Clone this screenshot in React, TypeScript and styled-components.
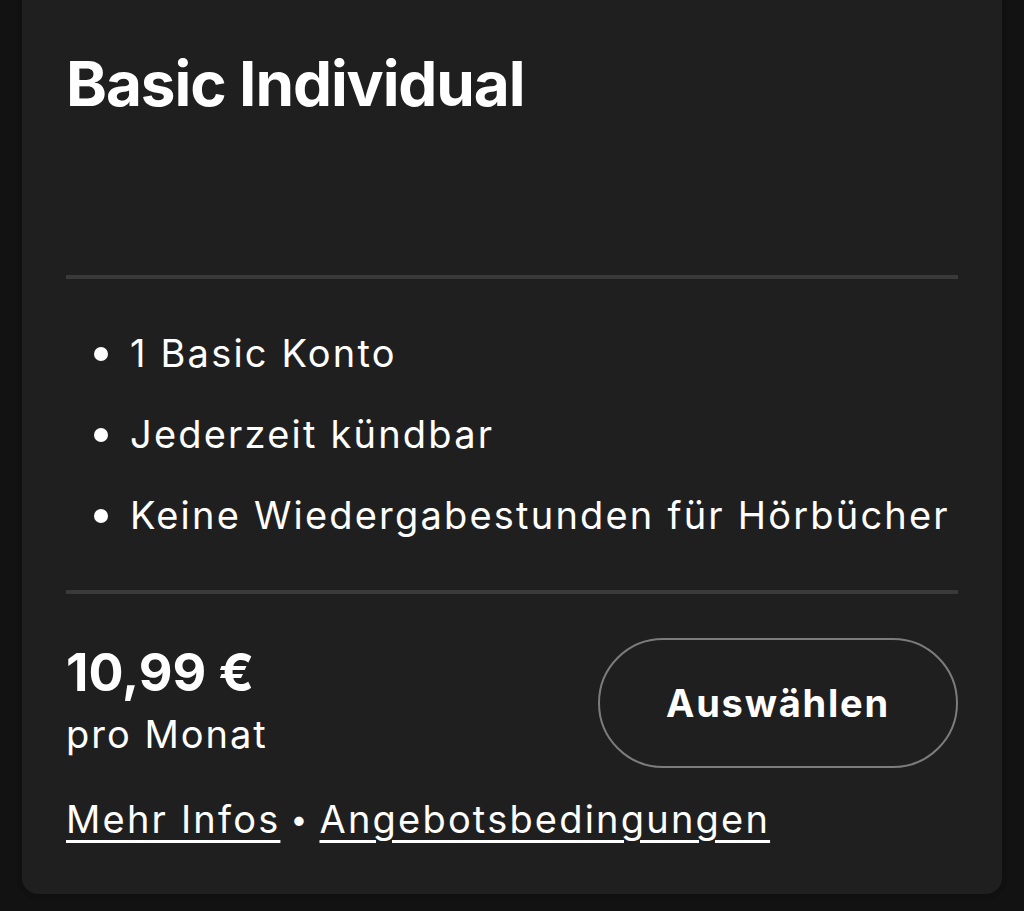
import React from "react";
import styled, { createGlobalStyle } from "styled-components";

const Global = createGlobalStyle`
  html, body { margin: 0; padding: 0; background: #121212; }
  body { font-family: Inter, "Noto Sans", sans-serif; color: #fff; -webkit-font-smoothing: antialiased; }
`;

const Page = styled.div`
  width: 1024px;
  height: 911px;
  background: #121212;
  padding: 0 22px;
  box-sizing: border-box;
`;

const Card = styled.div`
  background: #1f1f1f;
  border-radius: 0 0 16px 16px;
  padding: 44px 44px 50px;
  box-sizing: border-box;
  display: flex;
  flex-direction: column;
  box-shadow: 0 0 0 5px #101010;
`;

const Title = styled.h1`
  margin: 0;
  font-size: 62px;
  line-height: 80px;
  font-weight: 700;
  letter-spacing: -1.1px;
  height: 231px;
`;

const Divider = styled.hr`
  border: none;
  height: 4px;
  background: #3a3a3a;
  margin: 0;
`;

const Features = styled.ul`
  list-style: none;
  margin: 0;
  padding: 50px 0 50px;
  display: flex;
  flex-direction: column;
  gap: 32px;
`;

const Feature = styled.li`
  display: flex;
  align-items: center;
  gap: 22px;
  font-size: 38px;
  line-height: 49px;
  letter-spacing: 2.2px;
  padding-left: 28px;
  &::before {
    content: "";
    width: 14px;
    height: 14px;
    border-radius: 50%;
    background: #fff;
    flex: none;
  }
`;

const PriceRow = styled.div`
  display: flex;
  justify-content: space-between;
  align-items: flex-start;
  padding-top: 44px;
`;

const PriceBlock = styled.div`
  display: flex;
  flex-direction: column;
  padding-top: 6px;
`;

const Price = styled.div`
  font-size: 52px;
  line-height: 58px;
  font-weight: 700;
  letter-spacing: 0;
`;

const Per = styled.div`
  margin-top: 8px;
  font-size: 38px;
  line-height: 48px;
  letter-spacing: 2px;
`;

const SelectButton = styled.button`
  width: 360px;
  height: 130px;
  border-radius: 65px;
  border: 2px solid #7c7c7c;
  background: transparent;
  color: #fff;
  font-family: inherit;
  font-size: 38px;
  font-weight: 700;
  letter-spacing: 1.8px;
  cursor: pointer;
`;

const Links = styled.div`
  margin-top: 26px;
  font-size: 38px;
  line-height: 50px;
  letter-spacing: 2.2px;
  display: flex;
  align-items: center;
  gap: 10px;
`;

const Link = styled.a`
  color: #fff;
  text-decoration: underline;
  text-decoration-thickness: 3px;
  text-underline-offset: 7px;
`;

const Sep = styled.span`
  font-size: 30px;
`;

export default function App() {
  return (
    <>
      <Global />
      <Page>
        <Card>
          <Title>Basic Individual</Title>
          <Divider />
          <Features>
            <Feature>1 Basic Konto</Feature>
            <Feature>Jederzeit kündbar</Feature>
            <Feature>Keine Wiedergabestunden für Hörbücher</Feature>
          </Features>
          <Divider />
          <PriceRow>
            <PriceBlock>
              <Price>10,99 €</Price>
              <Per>pro Monat</Per>
            </PriceBlock>
            <SelectButton>Auswählen</SelectButton>
          </PriceRow>
          <Links>
            <Link href="#">Mehr Infos</Link>
            <Sep>•</Sep>
            <Link href="#">Angebotsbedingungen</Link>
          </Links>
        </Card>
      </Page>
    </>
  );
}
